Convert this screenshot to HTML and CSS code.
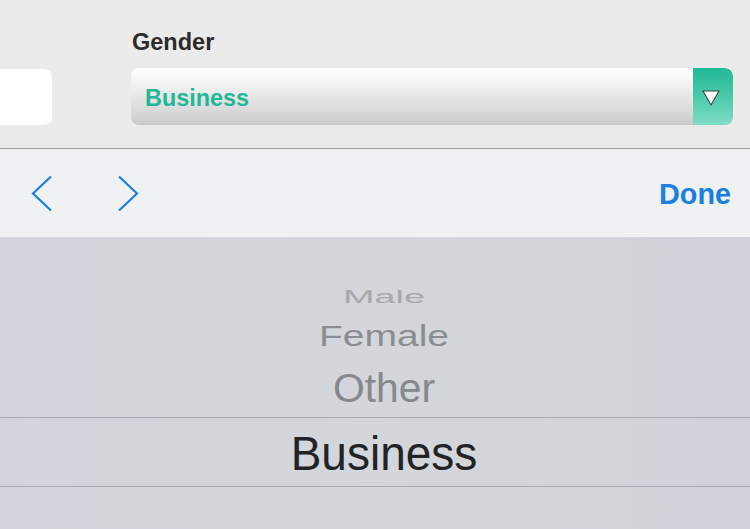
FILE: index.html
```html
<!DOCTYPE html>
<html>
<head>
<meta charset="utf-8">
<link rel="stylesheet" href="styles.css">
</head>
<body>
<div class="screen">
  <section class="form">
    <div class="field field-left">
      <div class="input"></div>
    </div>
    <div class="field field-right">
      <label class="label">Gender</label>
      <div class="select">
        <span class="select-value">Business</span>
        <span class="select-btn">
          <svg width="20" height="18" viewBox="0 0 20 18"><polygon points="2,2 18,2 10,16" fill="#fff" stroke="#33463f" stroke-width="1.1" stroke-linejoin="round"/></svg>
        </span>
      </div>
    </div>
  </section>
  <nav class="toolbar">
    <div class="arrows">
      <svg class="chev" width="22" height="37" viewBox="0 0 22 37"><polyline points="20,1.5 2,18.5 20,35.5" fill="none" stroke="#1a7fe0" stroke-width="2.2"/></svg>
      <svg class="chev" width="22" height="37" viewBox="0 0 22 37"><polyline points="2,1.5 20,18.5 2,35.5" fill="none" stroke="#1a7fe0" stroke-width="2.2"/></svg>
    </div>
    <span class="done">Done</span>
  </nav>
  <section class="picker">
    <div class="row row-male"><span>Male</span></div>
    <div class="row row-female"><span>Female</span></div>
    <div class="row row-other"><span>Other</span></div>
    <div class="band"><span>Business</span></div>
  </section>
</div>
</body>
</html>
```
FILE: styles.css
```css
* { box-sizing: border-box; }
html, body { margin: 0; padding: 0; }
body {
  width: 750px;
  height: 529px;
  overflow: hidden;
  font-family: "Liberation Sans", Arial, sans-serif;
  background: #d0d4da;
}
.screen { display: flex; flex-direction: column; height: 529px; }

.form {
  height: 149px;
  background: #ebebeb;
  border-bottom: 1px solid #9c9c9c;
  display: grid;
  grid-template-columns: 52px 602px;
  column-gap: 79px;
  padding-top: 28px;
}
.field-left { display: flex; align-items: flex-start; padding-top: 41px; }
.input {
  width: 64px;
  height: 56px;
  margin-left: -12px;
  background: #fff;
  border-radius: 8px;
}
.label {
  display: block;
  font-size: 23.5px;
  line-height: 28px;
  font-weight: bold;
  color: #2b2b2b;
  margin-left: 1px;
  margin-bottom: 12px;
}
.select {
  height: 57px;
  display: flex;
  border-radius: 8px;
  background: linear-gradient(#ffffff 0%, #f1f1f1 30%, #d4d4d4 85%, #c9c9c9 100%);
  overflow: hidden;
}
.select-value {
  flex: 1;
  display: flex;
  align-items: center;
  padding: 3px 0 0 14px;
  font-size: 23.4px;
  font-weight: bold;
  color: #22b795;
}
.select-btn {
  width: 40px;
  display: flex;
  align-items: center;
  justify-content: center;
  padding: 2px 4px 0 0;
  background: linear-gradient(#22b996 0%, #4ac9a9 50%, #80ddc7 100%);
  border-radius: 0 8px 8px 0;
}

.toolbar {
  height: 88px;
  background: #f0f1f3;
  display: flex;
  align-items: center;
  justify-content: space-between;
  padding: 0 19px 0 31px;
}
.arrows { display: flex; gap: 64px; }
.chev { display: block; }
.done {
  font-size: 28.8px;
  font-weight: bold;
  color: #1a7fdf;
  margin-top: 3px;
}

.picker {
  flex: 1;
  background: linear-gradient(90deg, #d1d5db 0%, #d3d7dc 50%, #cfd3d9 100%);
  padding: 45px 0 0 18px;
  display: flex;
  flex-direction: column;
}
.row, .band {
  display: flex;
  align-items: center;
  justify-content: center;
  white-space: nowrap;
}
.row span, .band span { display: block; }
.row-male { height: 30px; }
.row-male span {
  font-size: 37.8px;
  line-height: 1;
  color: #a6a8ab;
  transform: scaleY(0.49);
}
.row-female { height: 47px; }
.row-female span {
  font-size: 39px;
  line-height: 1;
  color: #8b8d90;
  transform: scaleY(0.76);
}
.row-other { height: 58px; }
.row-other span {
  font-size: 40.8px;
  line-height: 1;
  color: #86888b;
  transform: scaleY(0.98);
}
.band {
  height: 70px;
  margin-left: -18px;
  padding: 1px 0 0 18px;
  border-top: 1px solid #a8adb3;
  border-bottom: 1px solid #a8adb3;
}
.band span {
  font-size: 46px;
  line-height: 1;
  color: #222326;
  transform: scaleY(1.06);
}
```
